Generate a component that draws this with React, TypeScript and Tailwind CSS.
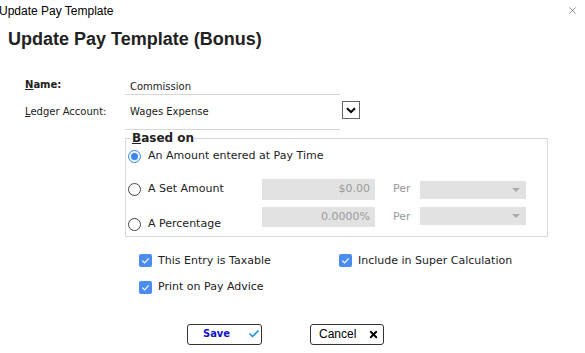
import { Check, X } from 'lucide-react';

function Radio({ checked }: { checked?: boolean }) {
  return (
    <span
      className={
        checked
          ? 'w-[13px] h-[13px] rounded-full border border-[#3b87e8] bg-[#eef4fc] flex items-center justify-center shrink-0'
          : 'w-[13px] h-[13px] rounded-full border border-[#444] bg-white shrink-0'
      }
    >
      {checked && <span className="w-[7px] h-[7px] rounded-full bg-[#3b87e8]" />}
    </span>
  );
}

function Tick() {
  return (
    <span className="w-[13px] h-[13px] rounded-[2px] bg-[#4a8cf0] flex items-center justify-center shrink-0">
      <svg width="9" height="9" viewBox="0 0 10 10" fill="none">
        <path d="M1.5 5.2 L4 7.6 L8.6 2.6" stroke="white" strokeWidth="1.3" />
      </svg>
    </span>
  );
}

function GraySelect() {
  return (
    <div className="w-[106px] h-[18px] bg-[#e2e2e2] flex items-center justify-end pr-[6px]">
      <span className="w-0 h-0 border-l-[4px] border-r-[4px] border-t-[4px] border-l-transparent border-r-transparent border-t-[#aaa]" />
    </div>
  );
}

export default function App() {
  return (
    <div className="w-[585px] h-[353px] bg-white overflow-hidden text-[#222]" style={{ fontFamily: '"DejaVu Sans", Verdana, sans-serif' }}>
      {/* Barra de título */}
      <div className="h-[21px] flex items-center justify-between">
        <span className="-ml-[1px] text-[12px] text-black" style={{ fontFamily: '"Liberation Sans", Arial, sans-serif' }}>Update Pay Template</span>
        <X className="w-[11px] h-[11px] mr-[7px] text-[#333]" strokeWidth={1.2} />
      </div>

      <h1 className="pl-[8px] mt-[7px] text-[18px] leading-[22px] font-bold text-[#222]" style={{ fontFamily: '"Liberation Sans", Arial, sans-serif' }}>
        Update Pay Template (Bonus)
      </h1>

      <div className="pl-[25px] mt-[27px] text-[10px]">
        {/* Nombre */}
        <div className="flex items-end">
          <span className="w-[100px] pb-[3px] font-bold"><span className="underline">N</span>ame:</span>
          <div className="w-[215px] h-[16px] border-b border-[#d6d6d6] pl-[5px] flex items-center">Commission</div>
        </div>

        {/* Cuenta contable */}
        <div className="flex items-start mt-[6px]">
          <span className="w-[100px] pt-[3px]"><span className="underline">L</span>edger Account:</span>
          <div className="w-[215px] h-[29px] border-b border-[#d6d6d6] pl-[5px] pt-[3px]">Wages Expense</div>
          <div className="w-[18px] h-[18px] ml-[2px] border border-[#666] flex items-center justify-center">
            <svg width="10" height="7" viewBox="0 0 10 7" fill="none">
              <path d="M1 1.2 L5 5 L9 1.2" stroke="black" strokeWidth="2" />
            </svg>
          </div>
        </div>

        {/* Basado en */}
        <fieldset className="ml-[100px] mt-[1px] w-[423px] border border-[#d9d9d9] pl-[2px] pt-[2px] pb-[3px]">
          <legend className="ml-[4px] px-0 text-[12px] leading-[14px] font-bold"><span className="underline">B</span>ased on</legend>
          <div className="flex items-center h-[18px]">
            <Radio checked />
            <span className="ml-[7px] text-[11px]">An Amount entered at Pay Time</span>
          </div>
          <div className="flex items-center mt-[14px]">
            <div className="w-[134px] flex items-center">
              <Radio />
              <span className="ml-[7px] text-[11px]">A Set Amount</span>
            </div>
            <div className="w-[113px] h-[21px] bg-[#e2e2e2] text-[#9a9a9a] text-[11px] flex items-center justify-end pr-[5px]">$0.00</div>
            <span className="ml-[18px] w-[27px] text-[11px] text-[#999]">Per</span>
            <GraySelect />
          </div>
          <div className="flex items-start mt-[7px]">
            <div className="w-[134px] flex items-center mt-[9px]">
              <Radio />
              <span className="ml-[7px] text-[11px]">A Percentage</span>
            </div>
            <div className="w-[113px] h-[20px] bg-[#e2e2e2] text-[#9a9a9a] text-[11px] flex items-center justify-end pr-[5px]">0.0000%</div>
            <span className="ml-[18px] w-[27px] h-[20px] flex items-center text-[11px] text-[#999]">Per</span>
            <GraySelect />
          </div>
        </fieldset>

        {/* Opciones */}
        <div className="ml-[114px] mt-[16px] grid grid-cols-[200px_200px] gap-y-[10px] text-[11px]">
          <label className="flex items-center">
            <Tick />
            <span className="ml-[6px]">This Entry is Taxable</span>
          </label>
          <label className="flex items-center">
            <Tick />
            <span className="ml-[6px]">Include in Super Calculation</span>
          </label>
          <label className="flex items-center">
            <Tick />
            <span className="ml-[6px]">Print on Pay Advice</span>
          </label>
        </div>

        {/* Botones */}
        <div className="flex ml-[162px] mt-[28px] gap-[48px]">
          <button className="w-[75px] h-[21px] rounded-[3px] border border-[#333] bg-white flex items-center pl-[15px]">
            <span className="text-[11px] font-bold text-[#1010c8]" style={{ fontFamily: 'Tahoma, "DejaVu Sans Condensed", sans-serif' }}>Save</span>
            <Check className="ml-[18px] w-[12px] h-[12px] text-[#2196f3]" strokeWidth={3.5} />
          </button>
          <button className="w-[74px] h-[21px] rounded-[3px] border border-[#333] bg-white flex items-center pl-[8px]">
            <span className="text-[12px] text-black" style={{ fontFamily: '"Liberation Sans", Arial, sans-serif' }}>Cancel</span>
            <X className="ml-[12px] w-[11px] h-[11px] text-black" strokeWidth={4} />
          </button>
        </div>
      </div>
    </div>
  );
}
